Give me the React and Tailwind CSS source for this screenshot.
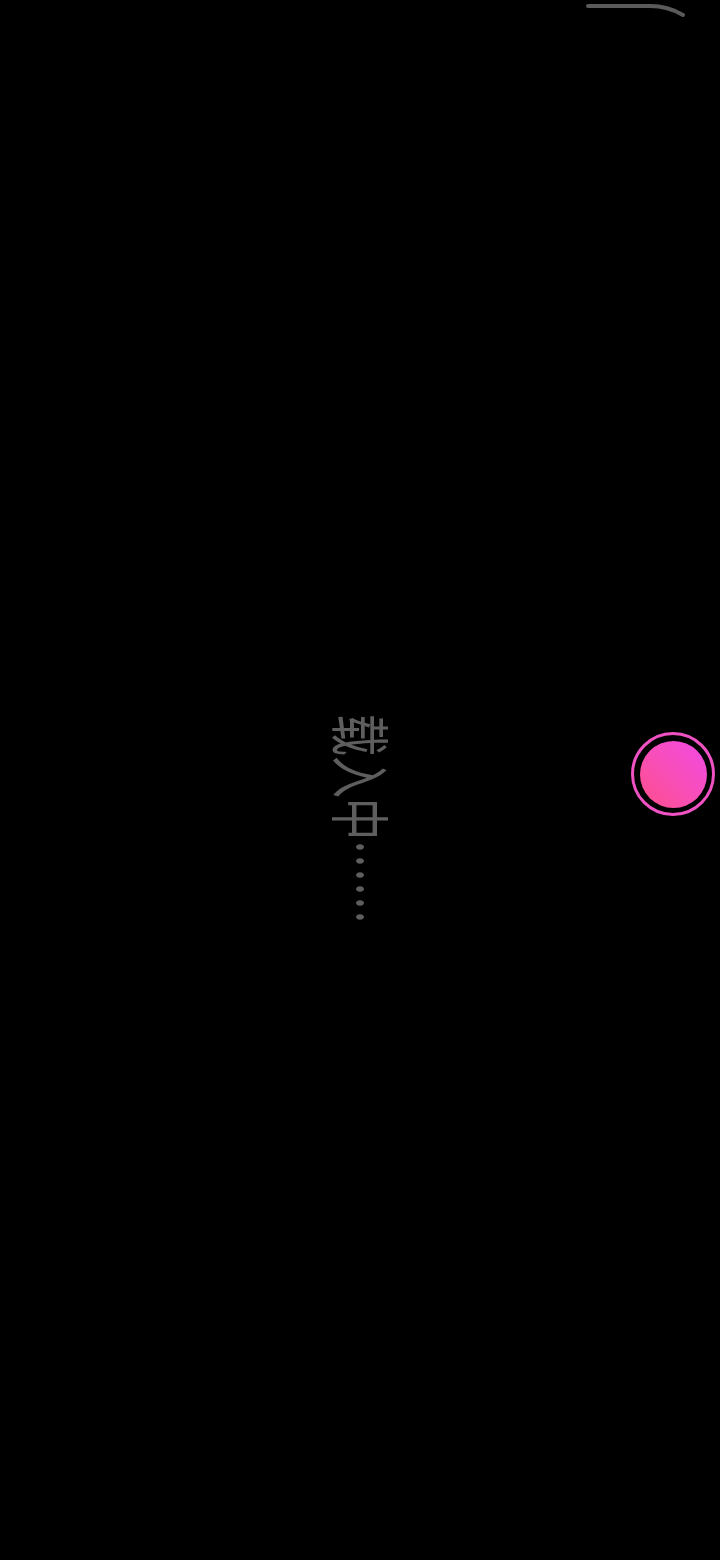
import React from "react";

export default function App() {
  return (
    <div className="relative w-full h-[1560px] bg-black overflow-hidden">
      <svg
        className="absolute left-0 top-0"
        width="720"
        height="30"
        viewBox="0 0 720 30"
        fill="none"
      >
        <path
          d="M588 6 H650 Q668 6 683 15"
          stroke="#5a5a5a"
          strokeWidth="4"
          strokeLinecap="round"
        />
      </svg>

      <div className="flex h-full items-center justify-center pt-[78px] pl-[6px]">
        <span className="block whitespace-nowrap rotate-90 scale-y-[1.43] text-[42px] leading-none text-[#5e5e5e] font-['Noto_Sans_CJK_SC',sans-serif]">
          载入中……
        </span>
      </div>

      <button className="absolute left-[631px] top-[732px] flex h-[84px] w-[84px] items-center justify-center rounded-full border-[3px] border-[#f052c4] bg-transparent p-0">
        <span className="block h-[67px] w-[67px] rounded-full bg-gradient-to-tr from-[#ff4d8a] to-[#f248e6]" />
      </button>
    </div>
  );
}
